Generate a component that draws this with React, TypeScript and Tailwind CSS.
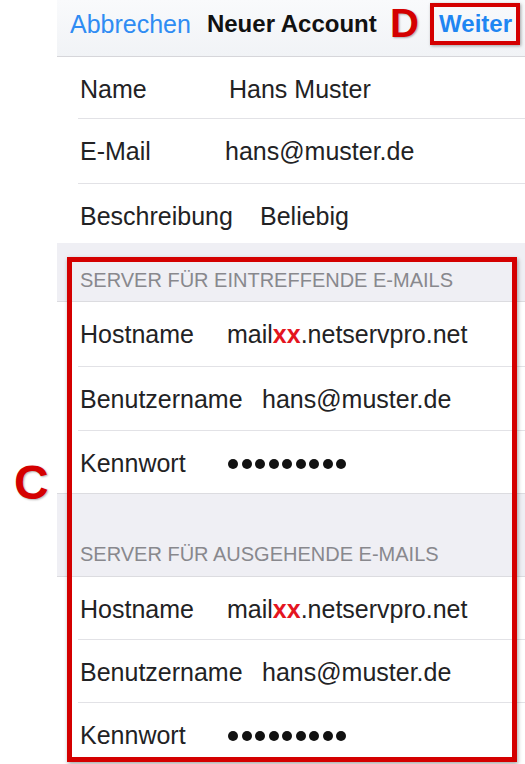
import React from "react";

type Row = { label: string; value: React.ReactNode; labelW: string; h: string };

const Dots = () => (
  <div className="flex items-center gap-[3.5px] pt-[8px]">
    {Array.from({ length: 9 }).map((_, i) => (
      <span key={i} className="block w-[10px] h-[10px] rounded-full bg-[#111]" />
    ))}
  </div>
);

const Host = () => (
  <span>
    mail<span className="text-[#e4151f] font-bold">xx</span>.netservpro.net
  </span>
);

function Group({ rows }: { rows: Row[] }) {
  return (
    <div className="bg-white">
      {rows.map((r, i) => (
        <div key={r.label + i} className={`${r.h} relative`}>
          <div className="flex pl-[23px] pt-[20px] text-[25px] leading-none text-[#222224]">
            <span className={`${r.labelW} shrink-0`}>{r.label}</span>
            <span>{r.value}</span>
          </div>
          {i < rows.length - 1 && (
            <div className="absolute bottom-0 left-[21px] right-0 h-px bg-[#e2e2e6]" />
          )}
        </div>
      ))}
    </div>
  );
}

export default function App() {
  return (
    <div className="relative w-[525px] h-[764px] overflow-hidden bg-white font-['Liberation_Sans',Arial,sans-serif]">
      <div className="flex h-full">
        <div className="w-[57px] shrink-0 bg-white" />
        <div className="flex-1 flex flex-col">
          {/* nav bar */}
          <div className="h-[57px] shrink-0 flex items-start pt-[12px] pl-[13px] text-[25px] leading-none bg-gradient-to-b from-[#f9fafc] to-[#f1f3f6] border-b border-[#d6d6da]">
            <span className="text-[#2f8cf3]">Abbrechen</span>
            <span className="ml-[16px] font-bold text-[#111] text-[24px]">Neuer Account</span>
            <span className="ml-auto mr-[13px] text-[#1f86f2] font-bold text-[24px]">Weiter</span>
          </div>

          <Group
            rows={[
              { label: "Name", value: "Hans Muster", labelW: "w-[149px]", h: "h-[62px]" },
              { label: "E-Mail", value: "hans@muster.de", labelW: "w-[145px]", h: "h-[65px]" },
              { label: "Beschreibung", value: "Beliebig", labelW: "w-[180px]", h: "h-[59px]" },
            ]}
          />

          <div className="h-[59px] shrink-0 bg-[#efeff4] border-b border-[#dcdce0] flex items-end pl-[23px] pb-[11px] text-[20px] leading-none text-[#88888d]">
            SERVER FÜR EINTREFFENDE E-MAILS
          </div>

          <Group
            rows={[
              { label: "Hostname", value: <Host />, labelW: "w-[147px]", h: "h-[65px]" },
              { label: "Benutzername", value: "hans@muster.de", labelW: "w-[182px]", h: "h-[64px]" },
              { label: "Kennwort", value: <Dots />, labelW: "w-[148px]", h: "h-[62px]" },
            ]}
          />

          <div className="h-[84px] shrink-0 bg-[#efeff4] border-y border-[#dcdce0] flex items-end pl-[23px] pb-[12px] text-[20px] leading-none text-[#88888d]">
            SERVER FÜR AUSGEHENDE E-MAILS
          </div>

          <Group
            rows={[
              { label: "Hostname", value: <Host />, labelW: "w-[147px]", h: "h-[63px]" },
              { label: "Benutzername", value: "hans@muster.de", labelW: "w-[182px]", h: "h-[63px]" },
              { label: "Kennwort", value: <Dots />, labelW: "w-[148px]", h: "h-[61px]" },
            ]}
          />
        </div>
      </div>

      {/* annotations */}
      <div className="absolute left-[430px] top-[3px] w-[90px] h-[42px] border-[4px] border-[#d40000] shadow-[1px_1px_3px_rgba(0,0,0,0.35)]" />
      <div className="absolute left-[390px] top-[3px] text-[40px] leading-none font-bold text-[#d40000] [text-shadow:1px_1px_2px_rgba(0,0,0,0.3)]">
        D
      </div>
      <div className="absolute left-[67px] top-[257px] w-[450px] h-[505px] border-[5px] border-[#d40000] shadow-[1px_2px_4px_rgba(0,0,0,0.35)]" />
      <div className="absolute left-[14px] top-[459px] text-[48px] leading-none font-bold text-[#d40000] [text-shadow:1px_1px_2px_rgba(0,0,0,0.3)]">
        C
      </div>
    </div>
  );
}
